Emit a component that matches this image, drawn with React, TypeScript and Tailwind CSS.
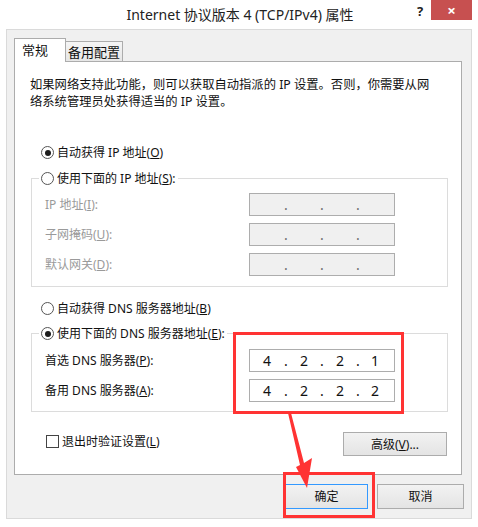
import React from "react";

const FONT = '"Noto Sans", "Noto Sans CJK SC", sans-serif';

function Radio({ checked = false }: { checked?: boolean }) {
  return (
    <span className="flex h-[13px] w-[13px] shrink-0 items-center justify-center rounded-full border border-[#555555] bg-white">
      {checked && <span className="h-[6px] w-[6px] rounded-full bg-[#1c1c1c]" />}
    </span>
  );
}

function IpField({ parts, disabled = false }: { parts: string[]; disabled?: boolean }) {
  const widths = ["w-[34px]", "w-[32px]", "w-[32px]", "w-[30px]"];
  return (
    <div
      className={`flex h-[23px] w-[146px] items-center border border-[#adadad] text-[14px] leading-none ${
        disabled ? "bg-[#f0f0f0] text-[#6d6d6d]" : "bg-white text-[#111111]"
      }`}
    >
      {parts.map((p, i) => (
        <React.Fragment key={i}>
          <span className={`${widths[i]} flex justify-center`}>{p}</span>
          {i < 3 && <span className="flex w-[4px] justify-center">.</span>}
        </React.Fragment>
      ))}
    </div>
  );
}

function FieldRow({
  label,
  parts,
  disabled = false,
}: {
  label: React.ReactNode;
  parts: string[];
  disabled?: boolean;
}) {
  return (
    <div className="flex items-center justify-between">
      <span className={disabled ? "text-[#9a9a9a]" : "text-[#111111]"}>{label}</span>
      <IpField parts={parts} disabled={disabled} />
    </div>
  );
}

function Button({ children, focused = false, className = "" }: { children: React.ReactNode; focused?: boolean; className?: string }) {
  return (
    <button
      type="button"
      className={`flex items-center justify-center border bg-gradient-to-b from-[#f2f2f2] to-[#e4e4e4] text-[12px] text-[#111111] ${
        focused ? "border-[#3399ff]" : "border-[#acacac]"
      } ${className}`}
    >
      {children}
    </button>
  );
}

export default function App() {
  const empty = ["", "", "", ""];
  return (
    <div
      className="relative h-[527px] w-[478px] overflow-hidden bg-white text-[12px] leading-[17px] text-[#111111]"
      style={{ fontFamily: FONT }}
    >
      {/* title bar */}
      <div className="relative flex h-[29px] items-center justify-center pl-[2px]">
        <span className="text-[14px] text-[#222222]">Internet 协议版本 4 (TCP/IPv4) 属性</span>
        <span className="absolute left-[417px] top-[3px] text-[13px] font-bold text-[#222222]">?</span>
        <span className="absolute left-[431px] top-0 flex h-[20px] w-[41px] items-center justify-center bg-[#c75050] text-[15px] font-bold leading-none text-white">
          ×
        </span>
      </div>

      {/* client area */}
      <div className="mx-[6px] flex h-[490px] flex-col border border-[#dadada] bg-[#f0f0f0] pt-[8px]">
        {/* tabs */}
        <div className="ml-[7px] flex items-end">
          <div className="relative z-10 -mb-px flex h-[24px] w-[52px] items-start border border-b-0 border-[#acacac] bg-white pl-[7px] pt-[3px] text-[13px]">
            常规
          </div>
          <div className="flex h-[20px] w-[57px] items-center justify-center border border-b-0 border-l-0 border-[#acacac] bg-gradient-to-b from-[#f5f5f5] to-[#e6e6e6] pt-[1px] text-[13px]">
            备用配置
          </div>
        </div>

        {/* tab page */}
        <div className="ml-[7px] flex h-[414px] w-[448px] flex-col border border-[#acacac] bg-white">
          <p className="pl-[15px] pt-[14px] text-[12.3px] leading-[17px]">
            如果网络支持此功能，则可以获取自动指派的 IP 设置。否则，你需要从网
            <br />
            络系统管理员处获得适当的 IP 设置。
          </p>

          <label className="ml-[26px] mt-[34px] flex h-[17px] items-center gap-[3px]">
            <Radio checked />
            <span>
              自动获得 IP 地址(<u>O</u>)
            </span>
          </label>

          <fieldset className="ml-[16px] mt-[9px] w-[417px] border border-[#dcdcdc] pb-[10px] pl-[13px] pr-[52px] pt-[6px]">
            <legend className="ml-[-6px] flex h-[17px] items-center gap-[3px] bg-white px-[2px]">
              <Radio />
              <span>
                使用下面的 IP 地址(<u>S</u>):
              </span>
            </legend>
            <div className="flex flex-col gap-[7px]">
              <FieldRow
                disabled
                parts={empty}
                label={
                  <>
                    IP 地址(<u>I</u>):
                  </>
                }
              />
              <FieldRow
                disabled
                parts={empty}
                label={
                  <>
                    子网掩码(<u>U</u>):
                  </>
                }
              />
              <FieldRow
                disabled
                parts={empty}
                label={
                  <>
                    默认网关(<u>D</u>):
                  </>
                }
              />
            </div>
          </fieldset>

          <label className="ml-[26px] mt-[13px] flex h-[17px] items-center gap-[3px]">
            <Radio />
            <span>
              自动获得 DNS 服务器地址(<u>B</u>)
            </span>
          </label>

          <fieldset className="ml-[16px] mt-[8px] w-[417px] border border-[#dcdcdc] pb-[9px] pl-[13px] pr-[52px] pt-[7px]">
            <legend className="ml-[-6px] flex h-[17px] items-center gap-[3px] bg-white px-[2px]">
              <Radio checked />
              <span>
                使用下面的 DNS 服务器地址(<u>E</u>):
              </span>
            </legend>
            <div className="flex flex-col gap-[7px]">
              <FieldRow
                parts={["4", "2", "2", "1"]}
                label={
                  <>
                    首选 DNS 服务器(<u>P</u>):
                  </>
                }
              />
              <FieldRow
                parts={["4", "2", "2", "2"]}
                label={
                  <>
                    备用 DNS 服务器(<u>A</u>):
                  </>
                }
              />
            </div>
          </fieldset>

          <div className="mt-[20px] flex items-start justify-between pl-[31px] pr-[14px]">
            <label className="flex h-[17px] items-center gap-[3px] pt-[1px]">
              <span className="h-[13px] w-[13px] border border-[#444444] bg-white" />
              <span>
                退出时验证设置(<u>L</u>)
              </span>
            </label>
            <Button className="h-[24px] w-[104px]">
              高级(<u>V</u>)...
            </Button>
          </div>
        </div>

        {/* dialog buttons */}
        <div className="mt-[9px] flex justify-end gap-[9px] pr-[7px]">
          <Button focused className="h-[25px] w-[83px]">
            确定
          </Button>
          <Button className="h-[25px] w-[87px]">取消</Button>
        </div>
      </div>

      {/* red annotations */}
      <div className="pointer-events-none absolute left-[233px] top-[332px] h-[82px] w-[171px] border-[3px] border-[#ff3333]" />
      <div className="pointer-events-none absolute left-[283px] top-[472px] h-[46px] w-[92px] border-[3px] border-[#ff3333]" />
      <svg className="pointer-events-none absolute left-0 top-0" width="478" height="527">
        <polygon
          points="288,413 291,413 304,463 312,458 307,488 296,467 300,465"
          fill="#ff3333"
        />
      </svg>
    </div>
  );
}
